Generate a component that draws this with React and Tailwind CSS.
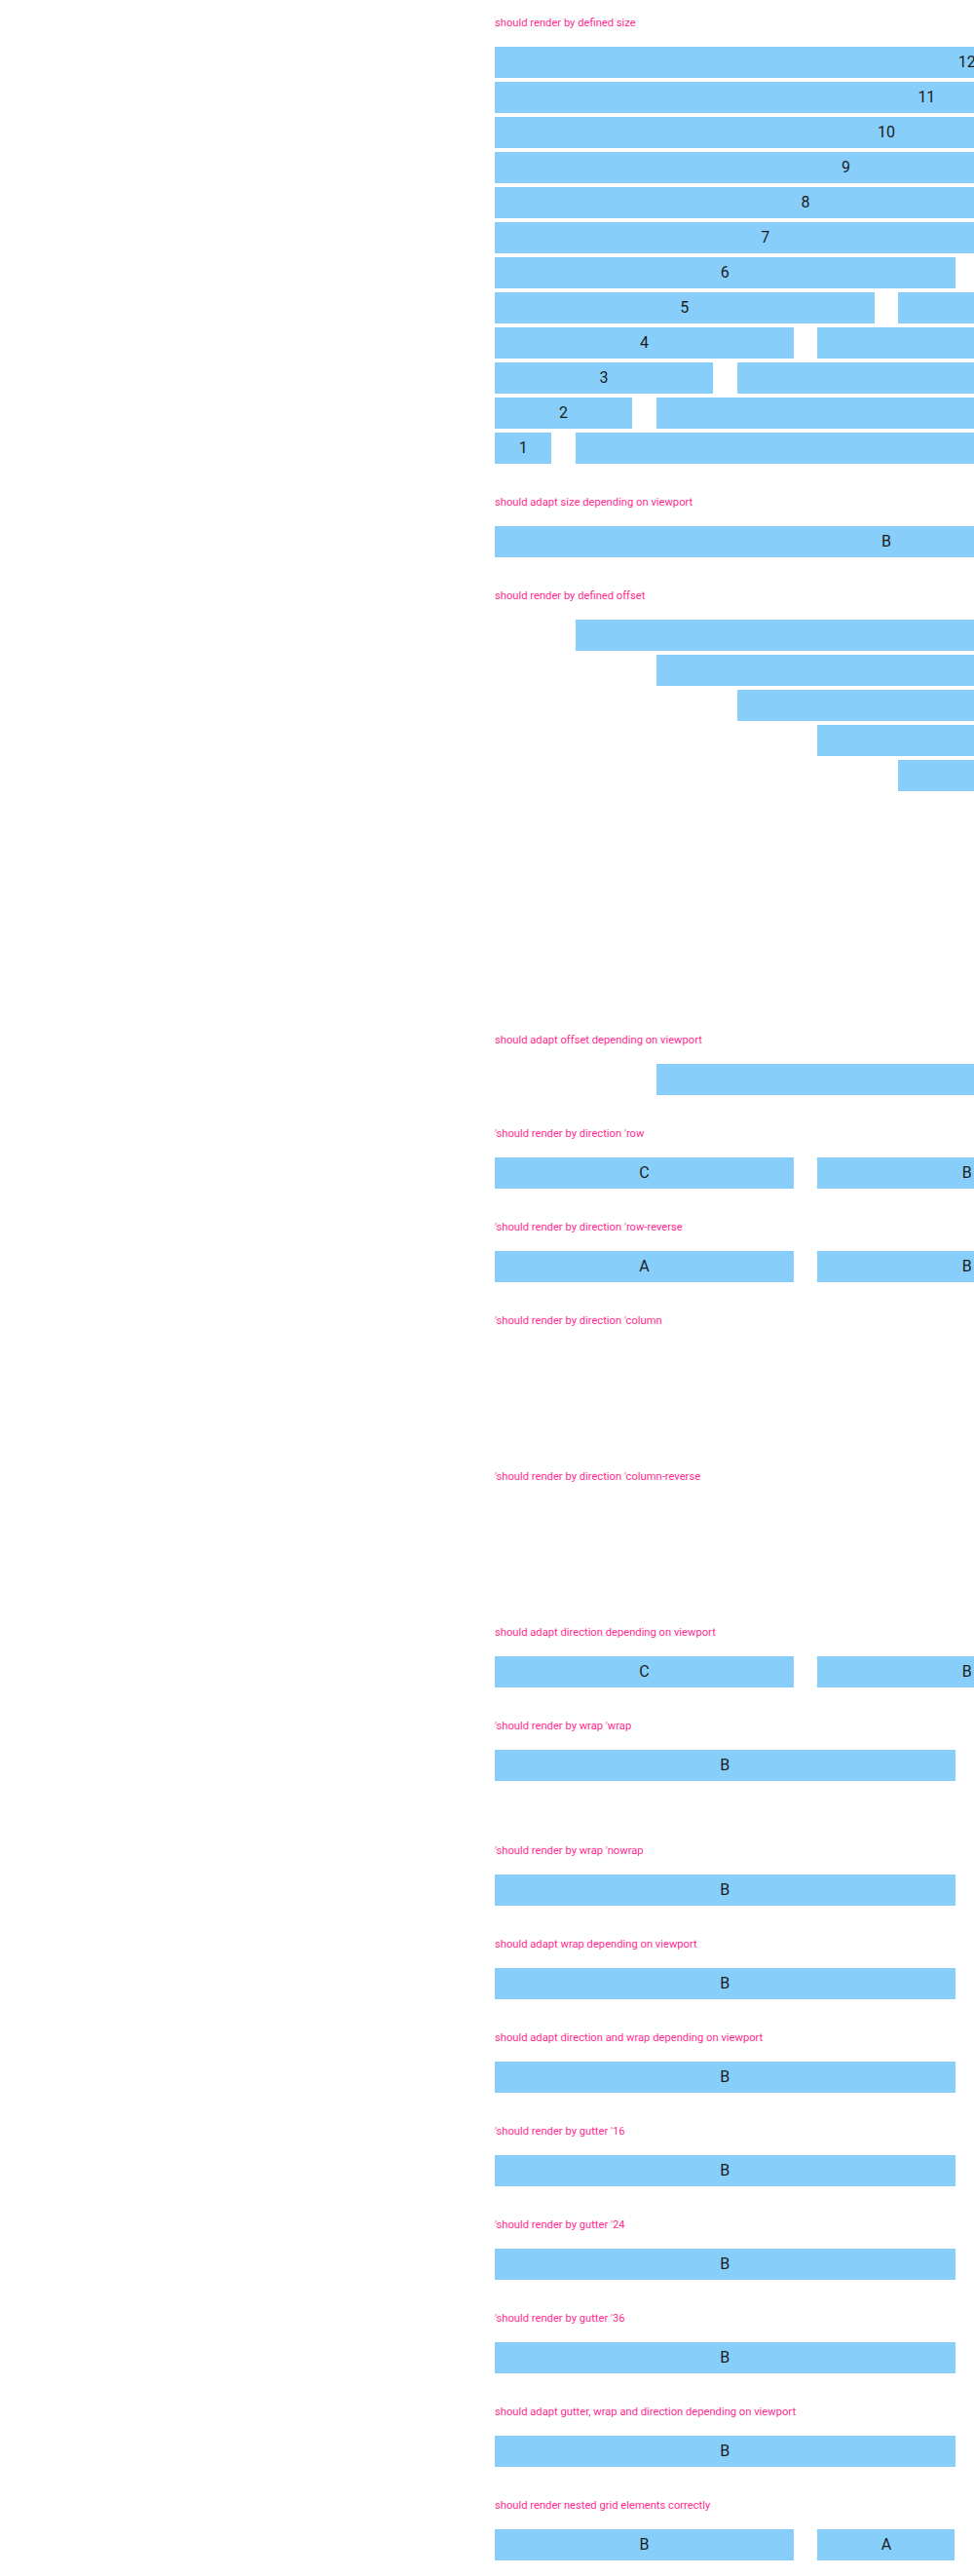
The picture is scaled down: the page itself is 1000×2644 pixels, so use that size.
const span = {
  1: 'col-span-1',
  2: 'col-span-2',
  3: 'col-span-3',
  4: 'col-span-4',
  5: 'col-span-5',
  6: 'col-span-6',
  7: 'col-span-7',
  8: 'col-span-8',
  9: 'col-span-9',
  10: 'col-span-10',
  11: 'col-span-11',
  12: 'col-span-12',
};

const start = {
  2: 'col-start-2',
  3: 'col-start-3',
  4: 'col-start-4',
  5: 'col-start-5',
  6: 'col-start-6',
  7: 'col-start-7',
  8: 'col-start-8',
  9: 'col-start-9',
  10: 'col-start-10',
  11: 'col-start-11',
  12: 'col-start-12',
};

function Cell({ size, offset, children }) {
  return (
    <div
      className={`${span[size]} ${offset ? start[offset + 1] : ''} h-8 bg-[#87cefa] flex items-center justify-center text-[16px] text-[#1c1c1c]`}
    >
      {children}
    </div>
  );
}

function Row({ children }) {
  return <div className="grid grid-cols-12 gap-x-[24.6px] w-[969.6px]">{children}</div>;
}

function Section({ title, children }) {
  return (
    <div className="pt-4 pb-4">
      <div className="h-4 leading-4 text-[11.2px] text-[#ff2a92] mb-4 whitespace-nowrap">{title}</div>
      {children}
    </div>
  );
}

function OnlyB() {
  return (
    <Row>
      <Cell size={6}>B</Cell>
      <Cell size={6}>A</Cell>
    </Row>
  );
}

export default function App() {
  const sizes = [12, 11, 10, 9, 8, 7, 6, 5, 4, 3, 2, 1];
  const offsets = [1, 2, 3, 4, 5, 6, 7, 8, 9, 10, 11];

  return (
    <div className="w-[1000px] overflow-hidden bg-white" style={{ fontFamily: 'Roboto, "Noto Sans", sans-serif' }}>
      <div className="pl-[508px]">
        <Section title="should render by defined size">
          <div className="flex flex-col gap-1">
            {sizes.map((n) => (
              <Row key={n}>
                <Cell size={n}>{n}</Cell>
                {n < 12 && <Cell size={12 - n} />}
              </Row>
            ))}
          </div>
        </Section>

        <Section title="should adapt size depending on viewport">
          <Row>
            <Cell size={10}>B</Cell>
          </Row>
        </Section>

        <Section title="should render by defined offset">
          <div className="flex flex-col gap-1">
            {offsets.map((o) => (
              <Row key={o}>
                <Cell size={12 - o} offset={o} />
              </Row>
            ))}
          </div>
        </Section>

        <Section title="should adapt offset depending on viewport">
          <Row>
            <Cell size={10} offset={2} />
          </Row>
        </Section>

        <Section title="'should render by direction 'row">
          <Row>
            <Cell size={4}>C</Cell>
            <Cell size={4}>B</Cell>
            <Cell size={4}>A</Cell>
          </Row>
        </Section>

        <Section title="'should render by direction 'row-reverse">
          <Row>
            <Cell size={4}>A</Cell>
            <Cell size={4}>B</Cell>
            <Cell size={4}>C</Cell>
          </Row>
        </Section>

        <Section title="'should render by direction 'column">
          <div className="h-24" />
        </Section>

        <Section title="'should render by direction 'column-reverse">
          <div className="h-24" />
        </Section>

        <Section title="should adapt direction depending on viewport">
          <Row>
            <Cell size={4}>C</Cell>
            <Cell size={4}>B</Cell>
            <Cell size={4}>A</Cell>
          </Row>
        </Section>

        <Section title="'should render by wrap 'wrap">
          <OnlyB />
          <div className="h-8" />
        </Section>

        <Section title="'should render by wrap 'nowrap">
          <OnlyB />
        </Section>

        <Section title="should adapt wrap depending on viewport">
          <OnlyB />
        </Section>

        <Section title="should adapt direction and wrap depending on viewport">
          <OnlyB />
        </Section>

        <Section title="'should render by gutter '16">
          <OnlyB />
        </Section>

        <Section title="'should render by gutter '24">
          <OnlyB />
        </Section>

        <Section title="'should render by gutter '36">
          <OnlyB />
        </Section>

        <Section title="should adapt gutter, wrap and direction depending on viewport">
          <OnlyB />
        </Section>

        <Section title="should render nested grid elements correctly">
          <Row>
            <Cell size={4}>B</Cell>
            <Cell size={2}>A</Cell>
          </Row>
        </Section>
      </div>
    </div>
  );
}
